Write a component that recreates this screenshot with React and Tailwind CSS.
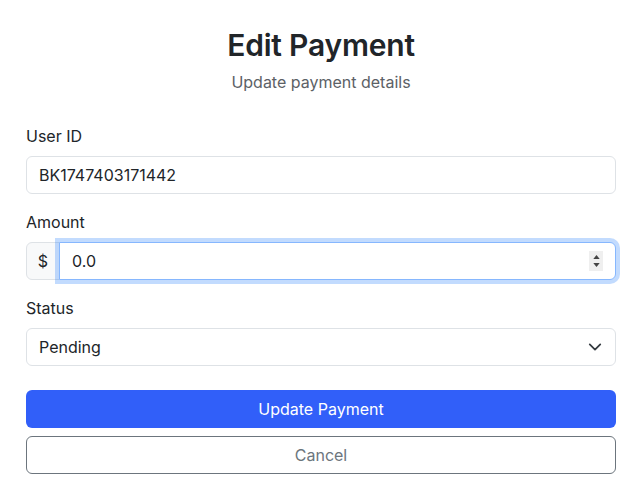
import { useState } from "react";

function Label({ children }) {
  return (
    <label className="mb-2 block text-base leading-6 text-[#212529]">
      {children}
    </label>
  );
}

export default function App() {
  const [userId, setUserId] = useState("BK1747403171442");
  const [amount, setAmount] = useState("0.0");
  const [status, setStatus] = useState("Pending");

  return (
    <div
      className="min-h-[504px] bg-white pl-[26px] pt-[27px] text-[#212529]"
      style={{ fontFamily: "Inter, 'Liberation Sans', sans-serif" }}
    >
      <div className="w-[590px]">
        <div className="mb-[30px] text-center">
          <h2 className="mb-[7px] text-[30px] font-semibold leading-[36px] tracking-[-0.2px]">
            Edit Payment
          </h2>
          <p className="text-base leading-6 text-[#5c6166]">Update payment details</p>
        </div>

        <div className="mb-4">
          <Label>User ID</Label>
          <input
            className="block h-[38px] w-full rounded-md border border-[#dee2e6] px-3 text-base text-[#212529] outline-none"
            value={userId}
            onChange={(e) => setUserId(e.target.value)}
          />
        </div>

        <div className="mb-4">
          <Label>Amount</Label>
          <div className="flex h-[38px]">
            <span className="flex w-[34px] items-center justify-center rounded-l-md border border-[#dee2e6] bg-[#f8f9fa] text-base">
              $
            </span>
            <div className="relative -ml-px flex flex-1 items-center rounded-r-md border border-[#86b7fe] bg-white shadow-[0_0_0_4px_rgba(13,110,253,0.25)]">
              <input
                className="h-full flex-1 bg-transparent px-3 text-base text-[#212529] outline-none"
                value={amount}
                onChange={(e) => setAmount(e.target.value)}
              />
              <div className="mr-[12px] flex h-[20px] w-[14px] flex-col items-center justify-center gap-[4px] bg-[#efefef]">
                <svg width="7" height="4" viewBox="0 0 8 5">
                  <path d="M4 0 L8 5 L0 5 Z" fill="#444" />
                </svg>
                <svg width="7" height="4" viewBox="0 0 8 5">
                  <path d="M0 0 L8 0 L4 5 Z" fill="#444" />
                </svg>
              </div>
            </div>
          </div>
        </div>

        <div className="mb-6">
          <Label>Status</Label>
          <div className="relative">
            <select
              className="block h-[38px] w-full appearance-none rounded-md border border-[#dee2e6] bg-white px-3 text-base text-[#212529] outline-none"
              value={status}
              onChange={(e) => setStatus(e.target.value)}
            >
              <option>Pending</option>
              <option>Completed</option>
              <option>Failed</option>
            </select>
            <svg
              className="pointer-events-none absolute right-[14px] top-[12px]"
              width="14"
              height="14"
              viewBox="0 0 16 16"
            >
              <path
                d="m2 5 6 6 6-6"
                fill="none"
                stroke="#343a40"
                strokeWidth="2"
                strokeLinecap="round"
                strokeLinejoin="round"
              />
            </svg>
          </div>
        </div>

        <button className="mb-2 block h-[38px] w-full rounded-md bg-[#315ff9] text-base text-white">
          Update Payment
        </button>
        <button className="block h-[38px] w-full rounded-md border border-[#6c757d] bg-white text-base text-[#6c757d]">
          Cancel
        </button>
      </div>
    </div>
  );
}
